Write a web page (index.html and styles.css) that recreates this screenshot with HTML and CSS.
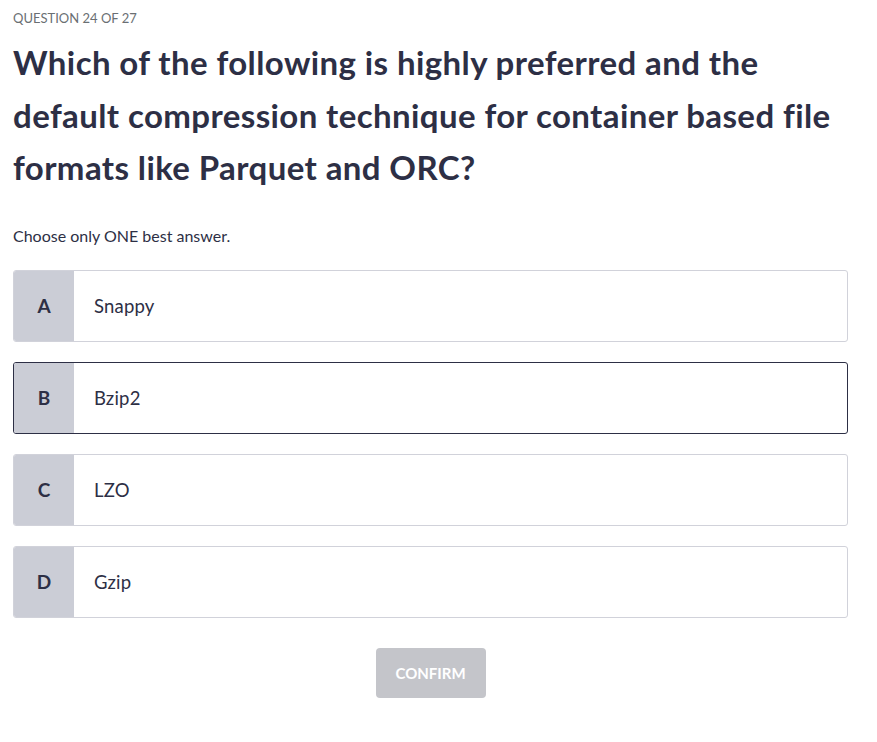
FILE: index.html
```html
<!DOCTYPE html>
<html>
<head>
<meta charset="utf-8">
<link rel="stylesheet" href="styles.css">
</head>
<body>
<main class="quiz">
  <div class="counter">QUESTION 24 OF 27</div>
  <h1 class="question">Which of the following is highly preferred and the default compression technique for container based file formats like Parquet and ORC?</h1>
  <p class="hint">Choose only ONE best answer.</p>
  <div class="options">
    <div class="option"><div class="letter">A</div><div class="text">Snappy</div></div>
    <div class="option selected"><div class="letter">B</div><div class="text">Bzip2</div></div>
    <div class="option"><div class="letter">C</div><div class="text">LZO</div></div>
    <div class="option"><div class="letter">D</div><div class="text">Gzip</div></div>
  </div>
  <div class="actions"><button class="confirm">CONFIRM</button></div>
</main>
</body>
</html>
```
FILE: styles.css
```css
html, body {
  margin: 0;
  padding: 0;
  background: #ffffff;
}
body {
  font-family: Lato, "Open Sans", sans-serif;
  color: #2d2f45;
}
.quiz {
  width: 835px;
  margin-left: 13px;
  padding-top: 9px;
}
.counter {
  font-size: 13px;
  line-height: 18px;
  color: #6a6f73;
}
.question {
  margin: 9px 0 0 0;
  font-size: 33px;
  line-height: 52.5px;
  font-weight: 700;
  color: #2d2f45;
  letter-spacing: 0.4px;
}
.hint {
  margin: 31px 0 0 0;
  font-size: 16px;
  line-height: 22px;
  color: #2d2f45;
}
.options {
  margin-top: 23px;
  display: flex;
  flex-direction: column;
  gap: 20px;
}
.option {
  display: flex;
  height: 70px;
  border: 1px solid #d1d2da;
  border-radius: 3px;
  overflow: hidden;
  background: #fff;
}
.option.selected {
  border-color: #2d2f45;
}
.letter {
  width: 60px;
  flex: none;
  background: #cbcdd6;
  display: flex;
  align-items: center;
  justify-content: center;
  font-size: 19px;
  font-weight: 700;
  color: #2d2f45;
}
.text {
  display: flex;
  align-items: center;
  padding-left: 20px;
  font-size: 18.5px;
  letter-spacing: 0.2px;
  color: #2d2f45;
}
.actions {
  display: flex;
  justify-content: center;
  margin-top: 30px;
}
.confirm {
  width: 110px;
  height: 50px;
  border: none;
  border-radius: 4px;
  background: #c4c5ca;
  color: #ffffff;
  font-family: Lato, "Open Sans", sans-serif;
  font-size: 15px;
  font-weight: 700;
  padding: 0;
}
```
